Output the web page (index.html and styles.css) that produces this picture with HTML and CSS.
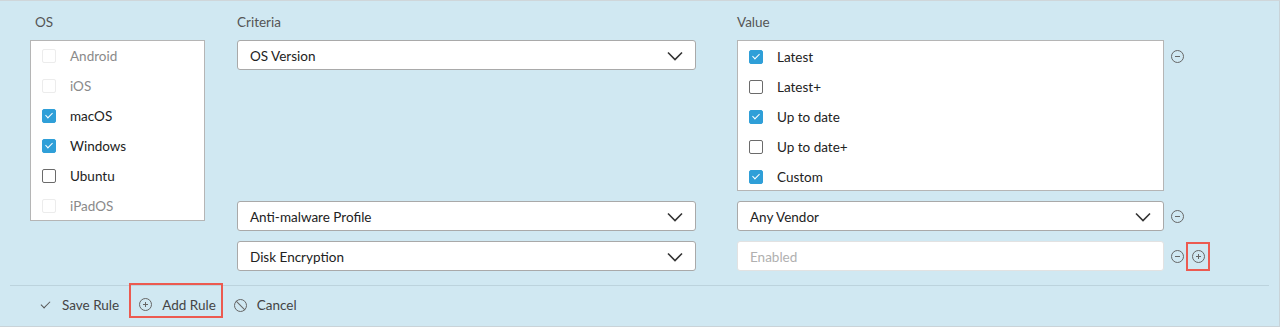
FILE: index.html
```html
<!DOCTYPE html>
<html lang="en">
<head>
  <meta charset="UTF-8">
  <title>Compliance Rule</title>
  <link rel="stylesheet" href="styles.css">
</head>
<body>

  <div class="rule-panel">
    <div class="rule-body">

      <!-- OS column -->
      <div class="os-col">
        <div class="col-label">OS</div>
        <div class="check-list os-list">
          <div class="check-row disabled"><span class="box"></span>Android</div>
          <div class="check-row disabled"><span class="box"></span>iOS</div>
          <div class="check-row"><span class="box checked"></span>macOS</div>
          <div class="check-row"><span class="box checked"></span>Windows</div>
          <div class="check-row"><span class="box"></span>Ubuntu</div>
          <div class="check-row disabled"><span class="box"></span>iPadOS</div>
        </div>
      </div>

      <!-- Criteria / Value rules -->
      <div class="rules-col">
        <div class="rule-head">
          <div class="col-label criteria">Criteria</div>
          <div class="col-label">Value</div>
        </div>

        <div class="rule-row">
          <div class="select criteria">OS Version
            <svg class="chevron" width="16" height="10" viewBox="0 0 16 10"><polyline points="1,1.5 8,8.5 15,1.5" /></svg>
          </div>
          <div class="check-list value-list">
            <div class="check-row"><span class="box checked"></span>Latest</div>
            <div class="check-row"><span class="box"></span>Latest+</div>
            <div class="check-row"><span class="box checked"></span>Up to date</div>
            <div class="check-row"><span class="box"></span>Up to date+</div>
            <div class="check-row"><span class="box checked"></span>Custom</div>
          </div>
          <div class="row-actions first">
            <span class="circle-btn minus"></span>
          </div>
        </div>

        <div class="rule-row">
          <div class="select criteria">Anti-malware Profile
            <svg class="chevron" width="16" height="10" viewBox="0 0 16 10"><polyline points="1,1.5 8,8.5 15,1.5" /></svg>
          </div>
          <div class="select value">Any Vendor
            <svg class="chevron" width="16" height="10" viewBox="0 0 16 10"><polyline points="1,1.5 8,8.5 15,1.5" /></svg>
          </div>
          <div class="row-actions">
            <span class="circle-btn minus"></span>
          </div>
        </div>

        <div class="rule-row">
          <div class="select criteria">Disk Encryption
            <svg class="chevron" width="16" height="10" viewBox="0 0 16 10"><polyline points="1,1.5 8,8.5 15,1.5" /></svg>
          </div>
          <div class="select value empty">Enabled</div>
          <div class="row-actions">
            <span class="circle-btn minus"></span>
            <span class="highlight"><span class="circle-btn plus"></span></span>
          </div>
        </div>
      </div>
    </div>

    <!-- Footer buttons -->
    <div class="rule-footer">
      <div class="foot-btn"><span class="tick"></span>Save Rule</div>
      <div class="foot-btn outlined"><span class="circle-btn plus"></span>Add Rule</div>
      <div class="foot-btn"><span class="circle-btn cancel"></span>Cancel</div>
    </div>
  </div>

</body>
</html>
```

FILE: styles.css
```css
body {
  margin: 0;
  padding: 0;
  font-family: Lato, "Open Sans", sans-serif;
  font-size: 13.5px;
  color: #222;
  background: #fff;
}

.rule-panel {
  width: 1279px;
  height: 325px;
  background: #d0e8f2;
  border-top: 1px solid #cfd6da;
  border-right: 1px solid #c9d3d8;
  border-bottom: 1px solid #c9d3d8;
}

.rule-body {
  display: flex;
  padding-left: 30px;
  height: 284px;
}

.col-label {
  color: #555;
  font-size: 13.5px;
  height: 18px;
  line-height: 18px;
  margin: 12px 0 9px 5px;
}

.os-col {
  width: 175px;
}

.rules-col {
  margin-left: 32px;
}

.rule-head {
  display: flex;
}

.rule-head .col-label {
  margin-left: 0;
}

.rule-head .criteria {
  width: 500px;
}

/* checkbox lists */
.check-list {
  background: #fff;
  border: 1px solid #b5b5b5;
}

.os-list {
  height: 179px;
}

.value-list {
  width: 425px;
  height: 148px;
  padding-top: 1px;
}

.check-row {
  height: 30px;
  display: flex;
  align-items: center;
  padding-left: 11px;
}

.check-row.disabled {
  color: #8a8a8a;
}

.box {
  width: 12px;
  height: 12px;
  border: 1.5px solid #6b6b6b;
  border-radius: 2px;
  margin-right: 14px;
  position: relative;
  flex-shrink: 0;
}

.disabled .box {
  border-color: #ececec;
}

.box.checked {
  background: #2f9fd8;
  border-color: #2f9fd8;
}

.box.checked:after {
  content: '';
  position: absolute;
  left: 3.5px;
  top: 1px;
  width: 3px;
  height: 6px;
  border: solid #fff;
  border-width: 0 1.2px 1.2px 0;
  transform: rotate(45deg);
}

/* rule rows */
.rule-row {
  display: flex;
  align-items: flex-start;
  margin-bottom: 10px;
}

.select {
  height: 27px;
  background: #fff;
  border: 1px solid #a9a9a9;
  border-radius: 3px;
  display: flex;
  align-items: center;
  padding: 1px 0 0 12px;
  position: relative;
}

.select.criteria {
  width: 445px;
  margin-right: 41px;
}

.select.value {
  width: 413px;
}

.select.empty {
  border-color: #e2e2e2;
  color: #b0b0b0;
}

.chevron {
  position: absolute;
  right: 12px;
  top: 10px;
  fill: none;
  stroke: #333;
  stroke-width: 1.6;
}

.row-actions {
  display: flex;
  align-items: center;
  height: 30px;
  margin-left: 7px;
}

.row-actions.first {
  height: 32px;
}

.circle-btn {
  width: 11px;
  height: 11px;
  border: 1px solid #666;
  border-radius: 50%;
  position: relative;
  display: inline-block;
  flex-shrink: 0;
}

.circle-btn.minus:before,
.circle-btn.plus:before {
  content: '';
  position: absolute;
  left: 3px;
  top: 5px;
  width: 5px;
  height: 1px;
  background: #666;
}

.circle-btn.plus:after {
  content: '';
  position: absolute;
  left: 5px;
  top: 3px;
  width: 1px;
  height: 5px;
  background: #666;
}

.circle-btn.cancel:before {
  content: '';
  position: absolute;
  left: 5px;
  top: -1px;
  width: 1px;
  height: 13px;
  background: #666;
  transform: rotate(-45deg);
}

.highlight {
  display: flex;
  align-items: center;
  justify-content: center;
  width: 20px;
  height: 25px;
  border: 2px solid #ec5a50;
  margin-left: 2px;
}

/* footer */
.rule-footer {
  margin: 0 10px;
  border-top: 1px solid #bcd3dd;
  height: 38px;
  display: flex;
  align-items: center;
  padding-left: 29px;
}

.foot-btn {
  display: flex;
  align-items: center;
  color: #444;
  height: 31px;
  margin-right: 10px;
}

.foot-btn .circle-btn {
  margin-right: 10px;
}

.foot-btn.outlined {
  align-self: flex-start;
  border: 2px solid #ec5a50;
  padding: 8px 5px 0 8px;
  margin-top: -3px;
  margin-right: 11px;
  height: 23px;
}

.tick {
  width: 4px;
  height: 8px;
  border: solid #555;
  border-width: 0 1px 1px 0;
  transform: rotate(45deg);
  margin: -3px 14px 0 4px;
}
```
